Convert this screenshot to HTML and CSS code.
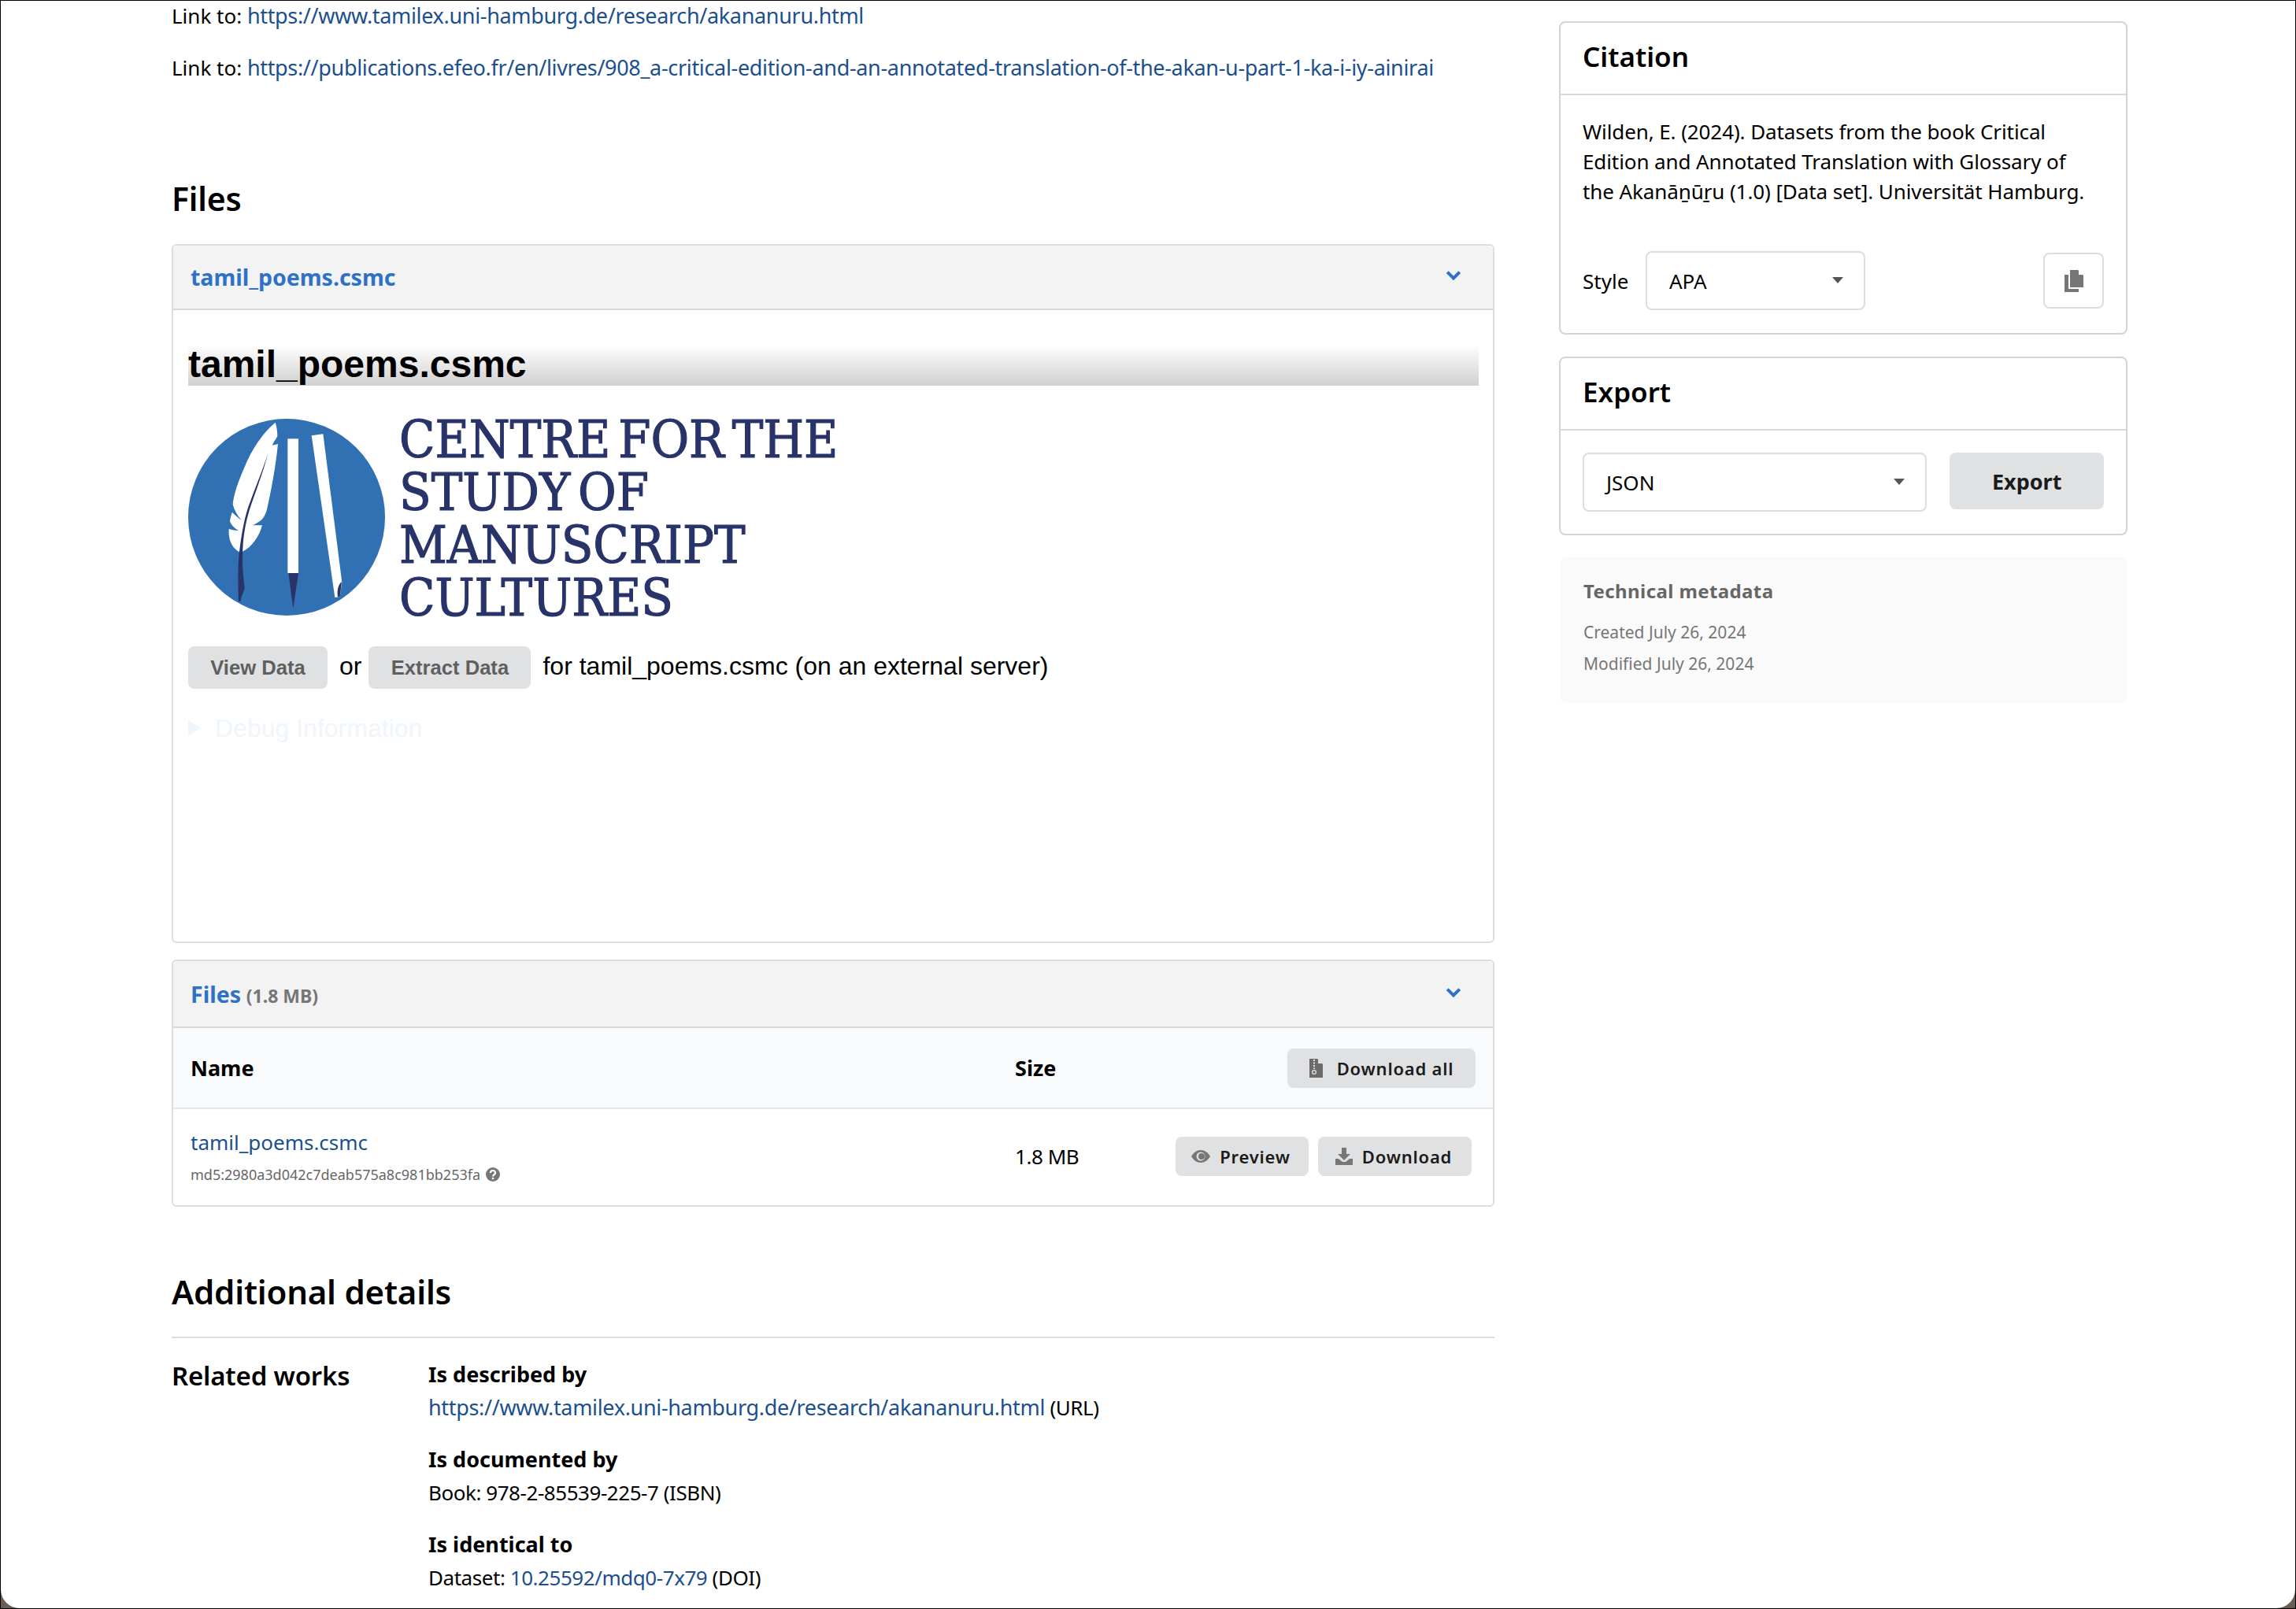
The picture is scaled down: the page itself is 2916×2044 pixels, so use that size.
FILE: index.html
```html
<!DOCTYPE html>
<html lang="en">
<head>
    <meta charset="UTF-8">
    <title>Datasets from the book Critical Edition</title>
    <link rel="stylesheet" href="styles.css">
</head>
<body>
    <div class="window">
        <div class="page">
            <main class="main-col">
                <p class="link-line">Link to: <a class="url-link" href="#">https://www.tamilex.uni-hamburg.de/research/akananuru.html</a></p>
                <p class="link-line">Link to: <a class="url-link" href="#">https://publications.efeo.fr/en/livres/908_a-critical-edition-and-an-annotated-translation-of-the-akan-u-part-1-ka-i-iy-ainirai</a></p>

                <h2 class="files-title">Files</h2>

                <section class="panel preview-panel">
                    <div class="panel-head">
                        <span class="panel-link">tamil_poems.csmc</span>
                        <svg class="chevron" viewBox="0 0 18 12"><path d="M2 2l7 7 7-7" /></svg>
                    </div>
                    <div class="preview-body">
                        <div class="preview-title">tamil_poems.csmc</div>
                        <div class="logo-row">
                            <svg class="logo" viewBox="58 64 750 750">
                                <circle cx="433" cy="439" r="375" fill="#3070b3" />
                                <path fill="#fff" d="M390 78 C396 95 398 115 398 130 C392 142 384 152 378 165 L400 160 C392 240 376 330 360 400 C356 425 345 445 330 455 C320 462 312 466 304 470 L340 470 C330 510 300 555 265 570 L250 570 C225 555 210 525 213 484 C225 488 238 490 250 490 C235 482 222 470 217 455 C218 445 221 432 226 420 C237 432 250 442 261 450 C245 432 234 412 228 390 C232 350 250 300 272 250 C300 180 340 120 390 78Z" />
                                <path fill="#28336a" d="M362 195 C340 265 310 335 287 400 C270 450 258 520 250 600 C247 650 249 710 250 760 L258 760 C260 740 268 725 273 712 C270 680 264 640 265 590 C266 520 275 465 292 410 C315 340 345 265 362 195Z" />
                                <rect x="437" y="140" width="41" height="512" fill="#fff" />
                                <path fill="#28336a" d="M440 652 L478 652 L458 788Z" />
                                <path fill="#fff" d="M528 128 L572 122 L644 688 L636 742 L617 745Z" />
                                <path fill="#28336a" d="M643 686 C630 695 624 718 628 743 L636 742Z" />
                            </svg>
                            <div class="logo-text">CENTRE FOR THE<br>STUDY OF<br>MANUSCRIPT<br>CULTURES</div>
                        </div>
                        <div class="action-row">
                            <span class="grey-btn view-btn">View Data</span>
                            <span class="or">or</span>
                            <span class="grey-btn extract-btn">Extract Data</span>
                            <span class="for-text">for tamil_poems.csmc (on an external server)</span>
                        </div>
                        <div class="debug-row">
                            <span class="debug-arrow"></span>
                            <span>Debug Information</span>
                        </div>
                    </div>
                </section>

                <section class="panel files-panel">
                    <div class="panel-head">
                        <span><span class="panel-link">Files</span> <small class="panel-size">(1.8 MB)</small></span>
                        <svg class="chevron" viewBox="0 0 18 12"><path d="M2 2l7 7 7-7" /></svg>
                    </div>
                    <div class="table-head">
                        <div class="col-name">Name</div>
                        <div class="col-size">Size</div>
                        <div class="col-action">
                            <span class="small-btn all-btn">
                                <svg class="ico-zip" viewBox="0 0 17 24"><path fill="#6b6b6b" d="M0 0h10l7 7v17H0z" /><path fill="#e0e1e2" d="M11 0l6 6h-6z" /><path fill="none" stroke="#e0e1e2" stroke-width="2" stroke-dasharray="2 1.5" d="M6 1v12" /><circle cx="6" cy="17" r="2.4" fill="none" stroke="#e0e1e2" stroke-width="1.3" /></svg>
                                Download all
                            </span>
                        </div>
                    </div>
                    <div class="table-row">
                        <div class="col-name">
                            <a class="file-link" href="#">tamil_poems.csmc</a>
                            <div class="md5">md5:2980a3d042c7deab575a8c981bb253fa
                                <svg class="ico-help" viewBox="0 0 18 18"><circle cx="9" cy="9" r="9" fill="#767676" /><path fill="none" stroke="#fff" stroke-width="2.2" d="M6 7c0-4 6-4 6 0 0 2.500-3 2-3 4.500" /><rect x="7.800" y="12.800" width="2.400" height="2.400" fill="#fff" /></svg>
                            </div>
                        </div>
                        <div class="col-size file-size">1.8 MB</div>
                        <div class="col-action row-actions">
                            <span class="small-btn preview-btn">
                                <svg class="ico-eye" viewBox="0 0 24 16"><path fill="#777" d="M0 8C3 3 7 0 12 0s9 3 12 8c-3 5-7 8-12 8S3 13 0 8z" /><circle cx="12" cy="8" r="5.500" fill="#e0e1e2" /><circle cx="13" cy="8" r="4" fill="#777" /></svg>
                                Preview
                            </span>
                            <span class="small-btn download-btn">
                                <svg class="ico-dl" viewBox="0 0 22 22"><path fill="#777" d="M8 0h6v8h5l-8 8-8-8h5z" /><path fill="#777" d="M0 14h4l5 4h4l5-4h4v8H0z" /></svg>
                                Download
                            </span>
                        </div>
                    </div>
                </section>

                <h2 class="details-title">Additional details</h2>
                <div class="details-row">
                    <div class="details-label">Related works</div>
                    <div class="details-list">
                        <div class="rel-title">Is described by</div>
                        <div class="rel-value"><a class="url-link" href="#">https://www.tamilex.uni-hamburg.de/research/akananuru.html</a> (URL)</div>
                        <div class="rel-title">Is documented by</div>
                        <div class="rel-value">Book: 978-2-85539-225-7 (ISBN)</div>
                        <div class="rel-title">Is identical to</div>
                        <div class="rel-value">Dataset: <a href="#">10.25592/mdq0-7x79</a> (DOI)</div>
                    </div>
                </div>
            </main>

            <aside class="side-col">
                <section class="side-card citation-card">
                    <h3>Citation</h3>
                    <div class="side-body">
                        <p class="citation-text">Wilden, E. (2024). Datasets from the book Critical Edition and Annotated Translation with Glossary of the Akanāṉūṟu (1.0) [Data set]. Universität Hamburg.</p>
                        <div class="style-row">
                            <span class="style-label">Style</span>
                            <div class="select style-select">APA<span class="caret"></span></div>
                            <span class="copy-btn">
                                <svg class="ico-copy" viewBox="0 0 24 28"><path fill="#767676" d="M7 0h10l7 7v15H7z" /><path fill="#fff" d="M18 0l6 6h-6z" /><path fill="#767676" d="M0 6h5v18h13v4H0z" /></svg>
                            </span>
                        </div>
                    </div>
                </section>

                <section class="side-card export-card">
                    <h3>Export</h3>
                    <div class="side-body export-row">
                        <div class="select export-select">JSON<span class="caret"></span></div>
                        <span class="grey-btn export-btn">Export</span>
                    </div>
                </section>

                <section class="tech-card">
                    <div class="tech-title">Technical metadata</div>
                    <div class="tech-line">Created July 26, 2024</div>
                    <div class="tech-line">Modified July 26, 2024</div>
                </section>
            </aside>
        </div>
    </div>
</body>
</html>
```
FILE: styles.css
```css
* {
    box-sizing: border-box;
}

html, body {
    margin: 0;
    height: 100%;
    overflow: hidden;
}

body {
    background: #000;
    padding: 1px;
    font-family: "Noto Sans", "Liberation Sans", sans-serif;
    font-size: 26px;
    color: #000;
}

a {
    color: #1c4f8e;
    text-decoration: none;
}

.url-link {
    font-size: 27px;
    letter-spacing: -0.33px;
}

.window {
    height: 100%;
    background: #6b5d50;
    overflow: hidden;
}

.page {
    background: #fff;
    height: 100%;
    border-radius: 0 0 24px 24px;
    display: grid;
    grid-template-columns: 1680px 722px;
    column-gap: 82px;
    padding-left: 217px;
}

/* left column */
.main-col {
    display: flex;
    flex-direction: column;
}

.link-line {
    margin: 0;
    height: 66px;
    line-height: 38px;
}

h2 {
    margin: 0;
    font-weight: 600;
    letter-spacing: -0.2px;
}

.files-title {
    margin-top: 97px;
    height: 80px;
    line-height: 44px;
    font-size: 41px;
}

.panel {
    border: 2px solid #ddd;
    border-radius: 6px;
    background: #fff;
}

.panel-head {
    height: 82px;
    background: #f3f3f3;
    border-bottom: 2px solid #d8d8d8;
    padding: 0 22px;
    display: flex;
    align-items: center;
    justify-content: space-between;
    border-radius: 6px 6px 0 0;
}

.panel-link {
    color: #2f71c7;
    font-weight: 700;
    font-size: 28.5px;
}

.panel-size {
    color: #767676;
    font-weight: 700;
    font-size: 23px;
}

.chevron {
    width: 20px;
    height: 14px;
    margin-right: 18px;
    margin-bottom: 4px;
}

.chevron path {
    fill: none;
    stroke: #2f71c7;
    stroke-width: 3.6;
}

.preview-panel {
    height: 888px;
}

.preview-body {
    padding: 44px 18px 0 19px;
    font-family: "Liberation Sans", sans-serif;
}

.preview-title {
    height: 52px;
    line-height: 50px;
    font-size: 48px;
    font-weight: bold;
    background: linear-gradient(#fff, #d0d0d0);
}

.logo-row {
    display: flex;
    margin-top: 42px;
    height: 252px;
}

.logo {
    width: 250px;
    height: 250px;
    flex: none;
}

.logo-text {
    margin-left: 18px;
    margin-top: -7px;
    font-family: "DejaVu Serif", serif;
    font-stretch: condensed;
    font-size: 66px;
    line-height: 67px;
    color: #28336a;
    letter-spacing: 0;
    word-spacing: -9px;
    -webkit-text-stroke: 1.2px #28336a;
}

.action-row {
    display: flex;
    align-items: center;
    margin-top: 37px;
    font-size: 32px;
    height: 54px;
}

.grey-btn {
    background: #e0e1e2;
    color: #5f5f5f;
    border-radius: 8px;
    font-weight: bold;
    font-size: 25.6px;
    height: 54px;
    display: flex;
    align-items: center;
    justify-content: center;
}

.view-btn {
    width: 177px;
}

.extract-btn {
    width: 206px;
}

.or {
    margin: -4px 9px 0 15px;
}

.for-text {
    margin: -4px 0 0 15px;
}

.debug-row {
    display: flex;
    align-items: center;
    margin-top: 30px;
    color: #eef5fb;
    font-size: 32px;
    height: 40px;
}

.debug-arrow {
    width: 0;
    height: 0;
    border-left: 16px solid #eef5fb;
    border-top: 10px solid transparent;
    border-bottom: 10px solid transparent;
    margin-right: 18px;
}

.files-panel {
    margin-top: 21px;
    height: 314px;
}

.files-panel .panel-head {
    height: 85px;
}

.table-head, .table-row {
    display: flex;
    align-items: center;
    padding-left: 22px;
}

.table-head {
    height: 103px;
    background: #f9fafb;
    border-bottom: 2px solid #e6e7e8;
    font-weight: 700;
    font-size: 27px;
}

.table-row {
    height: 123px;
    padding-bottom: 4px;
}

.col-name {
    width: 1047px;
}

.col-size {
    width: 170px;
}

.file-size {
    letter-spacing: -0.45px;
}

.col-action {
    flex: 1;
    display: flex;
    justify-content: flex-end;
    padding-right: 22px;
}

.row-actions {
    gap: 12px;
    padding-right: 27px;
}

.small-btn {
    display: flex;
    align-items: center;
    justify-content: center;
    gap: 12px;
    background: #e0e1e2;
    color: #1b1b1b;
    border-radius: 8px;
    font-weight: 600;
    font-size: 22px;
    letter-spacing: 0.8px;
    height: 50px;
}

.all-btn {
    width: 239px;
    gap: 18px;
}

.preview-btn {
    width: 169px;
    padding-right: 3px;
}

.download-btn {
    width: 195px;
    padding-right: 3px;
}

.ico-zip {
    width: 17px;
    height: 24px;
}

.ico-eye {
    width: 24px;
    height: 16px;
}

.ico-dl {
    width: 22px;
    height: 22px;
}

.file-link {
    display: block;
    line-height: 36px;
    font-size: 26px;
}

.md5 {
    margin-top: 10px;
    color: #666;
    font-size: 18px;
    line-height: 26px;
    display: flex;
    align-items: center;
    gap: 7px;
}

.ico-help {
    width: 18px;
    height: 18px;
}

.details-title {
    margin-top: 80px;
    height: 60px;
    line-height: 56px;
    font-size: 42px;
}

.details-row {
    border-top: 2px solid #ddd;
    margin-top: 25px;
    padding-top: 25px;
    display: flex;
}

.details-label {
    width: 326px;
    font-size: 33px;
    font-weight: 600;
    line-height: 46px;
    letter-spacing: -0.2px;
}

.rel-title {
    font-weight: 700;
    font-size: 27px;
    line-height: 42px;
}

.rel-value {
    line-height: 42px;
    margin-bottom: 24px;
    letter-spacing: -0.45px;
}

/* right column */
.side-col {
    padding-top: 26px;
    display: flex;
    flex-direction: column;
    gap: 28px;
}

.side-card {
    border: 2px solid #d4d4d4;
    border-radius: 8px;
    background: #fff;
}

.side-card h3 {
    margin: 0;
    height: 92px;
    line-height: 85px;
    padding-left: 28px;
    font-size: 35px;
    font-weight: 600;
    border-bottom: 2px solid #d8d8d8;
}

.side-body {
    padding: 0 28px;
}

.citation-card {
    height: 398px;
}

.citation-text {
    margin: 27px 0 0;
    padding-right: 12px;
    line-height: 38px;
    letter-spacing: -0.1px;
}

.style-row {
    display: flex;
    align-items: center;
    margin-top: 57px;
}

.style-label {
    width: 80px;
}

.select {
    position: relative;
    border: 2px solid #ddd;
    border-radius: 8px;
    display: flex;
    align-items: center;
    padding-left: 28px;
    background: #fff;
    height: 75px;
}

.style-select {
    width: 279px;
}

.export-select {
    width: 438px;
}

.caret {
    position: absolute;
    right: 26px;
    top: 31px;
    border-top: 8px solid #555;
    border-left: 7px solid transparent;
    border-right: 7px solid transparent;
}

.copy-btn {
    margin-left: auto;
    width: 77px;
    height: 71px;
    border: 2px solid #ddd;
    border-radius: 8px;
    display: flex;
    align-items: center;
    justify-content: center;
}

.ico-copy {
    width: 24px;
    height: 28px;
}

.export-card {
    height: 227px;
}

.export-row {
    display: flex;
    padding-top: 28px;
    gap: 29px;
}

.export-btn {
    width: 196px;
    height: 72px;
    color: #1b1b1b;
    font-family: "Noto Sans", sans-serif;
    font-weight: 700;
    font-size: 27px;
}

.tech-card {
    margin: 0 1px;
    height: 185px;
    background: #fafafa;
    border-radius: 8px;
    padding: 25px 30px;
    color: #767676;
}

.tech-title {
    font-weight: 700;
    font-size: 24px;
    letter-spacing: 0.4px;
    color: #666;
    line-height: 36px;
    margin-bottom: 14px;
}

.tech-line {
    line-height: 40px;
    font-size: 21px;
}
```
